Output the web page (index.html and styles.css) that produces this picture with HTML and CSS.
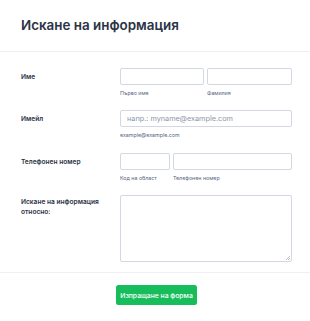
FILE: index.html
```html
<!DOCTYPE html>
<html lang="bg">
<head>
<meta charset="utf-8">
<link rel="stylesheet" href="styles.css">
</head>
<body>
<div class="form">
  <div class="header"><h1 class="title">Искане на информация</h1></div>
  <div class="rows">
    <div class="row row-name">
      <div class="label">Име</div>
      <div class="field">
        <div class="split split-name">
          <div class="sub"><div class="input"></div><div class="sublabel">Първо име</div></div>
          <div class="sub"><div class="input"></div><div class="sublabel">Фамилия</div></div>
        </div>
      </div>
    </div>
    <div class="row row-email">
      <div class="label">Имейл</div>
      <div class="field">
        <div class="input"><span class="placeholder">напр.: myname@example.com</span></div>
        <div class="sublabel">example@example.com</div>
      </div>
    </div>
    <div class="row row-phone">
      <div class="label">Телефонен номер</div>
      <div class="field">
        <div class="split split-phone">
          <div class="sub"><div class="input"></div><div class="sublabel">Код на област</div></div>
          <div class="sub"><div class="input"></div><div class="sublabel">Телефонен номер</div></div>
        </div>
      </div>
    </div>
    <div class="row row-text">
      <div class="label label-multi">Искане на информация относно:</div>
      <div class="field">
        <div class="textarea"><span class="grip"></span></div>
      </div>
    </div>
  </div>
  <div class="footer"><button class="submit">Изпращане на форма</button></div>
</div>
</body>
</html>
```
FILE: styles.css
```css
html, body { margin: 0; padding: 0; background: #fff; }
body { font-family: Inter, "Noto Sans", sans-serif; color: #2c3345; }
.form { width: 310px; }
.header {
  height: 51px;
  border-bottom: 1px solid #eef0f5;
  padding: 0 21px;
  display: flex;
  align-items: center;
  box-sizing: content-box;
}
.title { margin: 0; font-size: 13.4px; font-weight: 600; color: #2c3345; padding-bottom: 1px; }
.rows { padding-top: 16px; }
.row { display: grid; grid-template-columns: 99px 172px; padding-left: 21px; }
.row-name { height: 42px; }
.row-email { height: 43px; }
.row-phone { height: 42px; }
.row-text { height: 77px; border-bottom: 1px solid #eef0f5; padding-right: 18px; }
.label { font-size: 6.6px; font-weight: 600; line-height: 10px; padding-top: 4px; color: #2c3345; }
.label-multi { padding-top: 3px; line-height: 9.5px; padding-right: 15px; }
.split { display: grid; gap: 3px; }
.split-name { grid-template-columns: 84px 85px; }
.split-phone { grid-template-columns: 50px 119px; }
.input {
  height: 17px;
  box-sizing: border-box;
  border: 1px solid #d3d8e2;
  border-radius: 2px;
  background: #fff;
  display: flex;
  align-items: center;
  padding-left: 6px;
}
.placeholder { font-size: 7.3px; color: #8d96a8; }
.sublabel { font-size: 5.3px; color: #57647e; margin-top: 4px; line-height: 8px; }
.textarea {
  height: 67px;
  box-sizing: border-box;
  border: 1px solid #d3d8e2;
  border-radius: 2px;
  position: relative;
}
.grip {
  position: absolute; right: 1px; bottom: 1px; width: 4px; height: 4px;
  background: linear-gradient(135deg, transparent 45%, #b9bfca 45%, #b9bfca 55%, transparent 55%, transparent 70%, #b9bfca 70%, #b9bfca 80%, transparent 80%);
}
.footer { display: flex; justify-content: center; padding-top: 12px; padding-left: 3px; }
.submit {
  width: 81px; height: 20px;
  background: #18bd5b; color: #fff; border: none; border-radius: 2.5px;
  font-family: Inter, "Noto Sans", sans-serif; font-size: 6.8px; font-weight: 500;
  padding: 0; white-space: nowrap;
}
```
